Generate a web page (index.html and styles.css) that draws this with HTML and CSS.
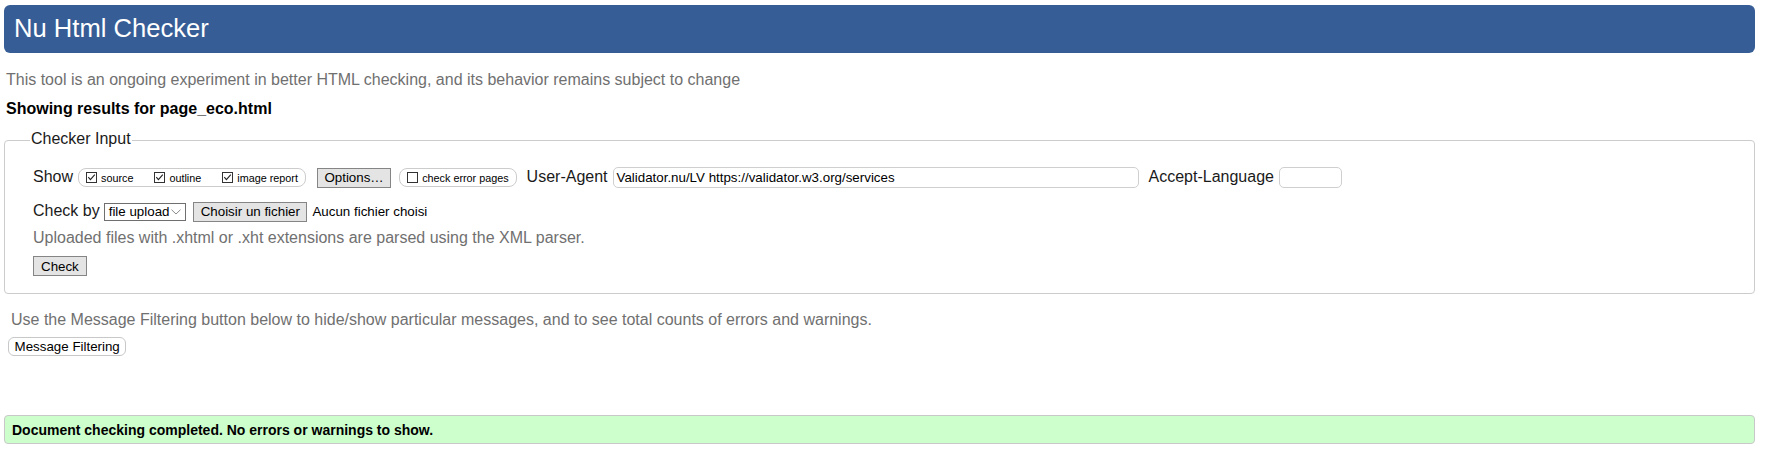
FILE: index.html
```html
<!DOCTYPE html>
<html lang="en">
<head>
<meta charset="utf-8">
<title>Nu Html Checker</title>
<link rel="stylesheet" href="styles.css">
</head>
<body>
<div class="page">
  <h1 class="title">Nu Html Checker</h1>
  <p class="tagline">This tool is an ongoing experiment in better HTML checking, and its behavior remains subject to change</p>
  <p class="results-for">Showing results for page_eco.html</p>

  <fieldset class="checker">
    <legend class="legend">Checker Input</legend>
    <div class="row">
      <span class="label">Show</span>
      <span class="group group-show">
        <span class="opt">
          <svg class="cb" viewBox="0 0 11 11"><rect x="0.5" y="0.5" width="10" height="10" fill="#fff" stroke="#333"/><path d="M2.3 5.2 L4.4 7.6 L8.8 2.6" fill="none" stroke="#222" stroke-width="1.1"/></svg>
          <span>source</span>
        </span>
        <span class="opt">
          <svg class="cb" viewBox="0 0 11 11"><rect x="0.5" y="0.5" width="10" height="10" fill="#fff" stroke="#333"/><path d="M2.3 5.2 L4.4 7.6 L8.8 2.6" fill="none" stroke="#222" stroke-width="1.1"/></svg>
          <span>outline</span>
        </span>
        <span class="opt">
          <svg class="cb" viewBox="0 0 11 11"><rect x="0.5" y="0.5" width="10" height="10" fill="#fff" stroke="#333"/><path d="M2.3 5.2 L4.4 7.6 L8.8 2.6" fill="none" stroke="#222" stroke-width="1.1"/></svg>
          <span>image report</span>
        </span>
      </span>
      <span class="btn btn-options">Options…</span>
      <span class="group group-err">
        <span class="opt">
          <svg class="cb" viewBox="0 0 11 11"><rect x="0.5" y="0.5" width="10" height="10" fill="#fff" stroke="#333"/></svg>
          <span>check error pages</span>
        </span>
      </span>
      <span class="label label-ua">User-Agent</span>
      <span class="field field-ua">Validator.nu/LV https://validator.w3.org/services</span>
      <span class="label label-al">Accept-Language</span>
      <span class="field field-al"></span>
    </div>
    <div class="row row-check">
      <span class="label">Check by</span>
      <span class="select">file upload<svg class="chev" viewBox="0 0 10 6"><path d="M0.5 0.7 L5 5 L9.5 0.7" fill="none" stroke="#8a8a8a"/></svg></span>
      <span class="btn btn-file">Choisir un fichier</span>
      <span class="file-none">Aucun fichier choisi</span>
    </div>
    <p class="hint hint-upload">Uploaded files with .xhtml or .xht extensions are parsed using the XML parser.</p>
    <span class="btn btn-check">Check</span>
  </fieldset>

  <p class="hint hint-filter">Use the Message Filtering button below to hide/show particular messages, and to see total counts of errors and warnings.</p>
  <span class="pill">Message Filtering</span>

  <div class="success">Document checking completed. No errors or warnings to show.</div>
</div>
</body>
</html>
```

FILE: styles.css
```css
* {
  box-sizing: border-box;
}

html,
body {
  margin: 0;
  background: #fff;
}

body {
  font-family: "Liberation Sans", Arial, sans-serif;
  color: #000;
}

.page {
  padding: 5px 27px 0 4px;
}

.title {
  margin: 0;
  height: 48px;
  padding: 0 0 2px 10px;
  background: #365d95;
  color: #fff;
  border-radius: 6px;
  font-size: 25.6px;
  font-weight: normal;
  line-height: 46px;
}

.tagline {
  margin: 18px 0 0 2px;
  font-size: 16px;
  line-height: 18px;
  color: #707070;
}

.results-for {
  margin: 11px 0 0 2px;
  font-size: 16px;
  line-height: 18px;
  font-weight: bold;
}

.checker {
  display: block;
  margin: 12px 0 0;
  padding: 16px 28px 17px;
  border: 1px solid #cccccc;
  border-radius: 4px;
  min-width: 0;
}

.legend {
  margin-left: -3px;
  padding: 0 1px 3px;
  font-size: 16px;
  line-height: 18px;
  color: #1a1a1a;
}

.row {
  display: flex;
  align-items: center;
  height: 21px;
}

.row-check {
  margin-top: 13px;
}

.label {
  font-size: 16px;
  line-height: 18px;
  color: #1a1a1a;
  margin-bottom: 2px;
  white-space: nowrap;
}

.group {
  display: flex;
  align-items: center;
  height: 19px;
  border: 1px solid #cccccc;
  border-radius: 8px;
  padding: 0 7px 0 7px;
  font-size: 10.8px;
  line-height: 13px;
  color: #000;
  white-space: nowrap;
}

.group-show {
  margin-left: 5px;
}

.group-err {
  margin-left: 8px;
}

.opt {
  display: flex;
  align-items: center;
  gap: 4px;
}

.opt + .opt {
  margin-left: 21px;
}

.cb {
  width: 11px;
  height: 11px;
  flex: none;
}

.opt span {
  padding-top: 2px;
}

.btn {
  display: inline-flex;
  align-items: center;
  height: 20px;
  padding: 0 7px;
  border: 1px solid #858585;
  background: #e4e4e4;
  font-size: 13.33px;
  color: #000;
  white-space: nowrap;
}

.btn-options {
  margin-left: 11px;
  padding: 0 6.5px;
}

.label-ua {
  margin-left: 10px;
}

.field {
  display: flex;
  align-items: center;
  height: 21px;
  border: 1px solid #cfcfcf;
  border-radius: 5px;
  padding: 0 3px;
  font-size: 13.33px;
  color: #000;
  white-space: nowrap;
}

.field-ua {
  margin-left: 5px;
  width: 526px;
}

.label-al {
  margin-left: 10px;
}

.field-al {
  margin-left: 5.5px;
  width: 63px;
}

.select {
  display: flex;
  align-items: center;
  margin-left: 4px;
  width: 82px;
  height: 18px;
  padding: 0 0 0 4px;
  border: 1px solid #6f6f6f;
  background: #fff;
  font-size: 13.33px;
  white-space: nowrap;
}

.chev {
  width: 10px;
  height: 6px;
  margin-left: 2px;
}

.btn-file {
  margin-left: 7.5px;
  padding: 0 6.5px;
}

.file-none {
  margin-left: 5px;
  font-size: 13.33px;
  white-space: nowrap;
}

.hint {
  font-size: 16px;
  line-height: 18px;
  color: #707070;
}

.hint-upload {
  margin: 7px 0 0;
}

.btn-check {
  margin-top: 9px;
}

.hint-filter {
  margin: 17px 0 0 7px;
}

.pill {
  display: inline-flex;
  align-items: center;
  margin: 8px 0 0 4px;
  height: 19px;
  padding: 0 5.6px;
  border: 1px solid #c8c8c8;
  border-radius: 6px;
  background: #fff;
  font-size: 13.33px;
  white-space: nowrap;
}

.success {
  margin-top: 59px;
  height: 29px;
  padding: 1px 0 0 7px;
  border: 1px solid #c8c8c8;
  border-radius: 4px;
  background: #ccffcc;
  font-size: 14px;
  font-weight: bold;
  line-height: 26px;
}
```
